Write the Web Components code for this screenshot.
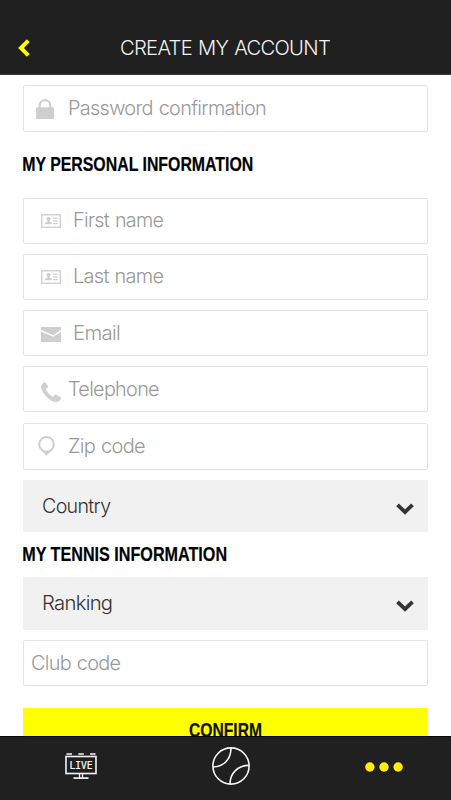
<!DOCTYPE html>
<html lang="en"><head><meta charset="utf-8"><title>Create my account</title>
<style>html,body{margin:0;height:100%;background:#fff;overflow:hidden}</style></head>
<body><account-screen></account-screen>
<script>
const define = (name, html, init) => customElements.define(name, class extends HTMLElement {
  connectedCallback() {
    if (this.shadowRoot) return;
    const root = this.attachShadow({mode: 'open'});
    root.innerHTML = html;
    if (init) init.call(this, root);
  }
});

const icons = {
  lock: ['0 0 18 20', 18, 20, '<path fill="#cfcfcf" d="M1 8.2h1.6V6.4C2.600 2.600 5.400 .3 9 .3s6.400 2.300 6.400 6.100v1.800H17q1 0 1 1v9.800q0 1-1 1H1q-1 0-1-1V9.200q0-1 1-1zM4.700 8.200h8.600V6.400C13.300 3.900 11.600 2.300 9 2.300S4.700 3.900 4.700 6.400z"/>'],
  card: ['0 0 20 14', 20, 14, '<rect x=".75" y=".75" width="18.500" height="12.500" fill="none" stroke="#d2d2d2" stroke-width="1.500"/><g fill="#cecece"><ellipse cx="7.500" cy="5.100" rx="2" ry="2.100"/><path d="M6.800 6h1.400v1.600l2.600 1.100v1.500H4V8.700l2.800-1.100z"/><path d="M12 3.500h4.700v1.300H12zM12 6.200h4.700v1.200H12zM12 8.900h4.700v1.300H12z"/></g>'],
  mail: ['0 0 20 15', 20, 15, '<path fill="#cfcfcf" d="M0 0h20v2.700L12.200 8.200 0 2.800zM0 4.500l12.200 5.200L20 4.700V15H0z"/>'],
  phone: ['0 0 20 20', 20, 20, '<path fill="#cfcfcf" d="M.6 2.700 3.400.3Q4.200-.1 4.800.7L6.900 4q.4.800-.3 1.400L5.300 6.600q-.4.500 0 1.300 2 4 5.700 6.500.8.500 1.300 0l1.500-1.500q.6-.5 1.400-.1l4.200 2.300q.9.600.5 1.400-1.500 3.300-4.500 3.500-4.300 0-9-4.500Q.200 9.500 0 4.900 0 3.500.600 2.700z"/>'],
  pin: ['0 0 17 20', 17, 20, '<path fill="#cfcfcf" fill-rule="evenodd" d="M8.500 0a8.300 8.300 0 0 1 8.300 8.300c0 3.600-2.200 5.900-4.800 8L8.500 19.800 5 16.300c-2.600-2.100-4.800-4.400-4.800-8A8.300 8.300 0 0 1 8.500 0zm0 1.900a6.300 6.300 0 1 0 0 12.600 6.300 6.300 0 0 0 0-12.600z"/>'],
  back: ['0 0 12 18', 12, 18, '<path d="M10.300 1.700 3 9l7.300 7.300" fill="none" stroke="#ff0" stroke-width="4"/>'],
  down: ['0 0 18 12', 18, 12, '<path d="M1.500 1.800 9 9l7.500-7.200" fill="none" stroke="#333" stroke-width="3.800"/>'],
  live: ['0 0 32 26', 32, 26, '<g fill="none" stroke="#f4f4f4"><rect x="1" y="3.500" width="30" height="17" stroke-width="1.600"/><path d="M1.500 .9h5.500M13.300 .9h5.500M25 .9h5.500" stroke-width="1.500"/><path d="M14.500 21v4M17.500 21v4" stroke-width="1.300"/><path d="M8.500 25.100h15" stroke-width="1.700"/></g><text x="4.500" y="16" textLength="23" lengthAdjust="spacingAndGlyphs" font-family="DejaVu Sans Mono,monospace" font-size="11" fill="#fff" stroke="#fff" stroke-width=".2">LIVE</text>'],
  ball: ['0 0 38 38', 38, 38, '<g fill="none" stroke="#f6f6f6" stroke-width="1.600"><circle cx="19" cy="19" r="18.100"/><path d="M19 .9C19 12 12 19.900 1 20M37 18.400C26 18.500 18 26 18 37"/></g>'],
  more: ['0 0 38 10', 38, 10, '<g fill="#ffee0a"><circle cx="4.900" cy="5" r="4.700"/><circle cx="19" cy="5" r="4.700"/><circle cx="33.100" cy="5" r="4.700"/></g>']
};

define('ui-icon', '<style>:host{display:block;flex:none}svg{display:block}</style>', function (root) {
  const [box, w, h, art] = icons[this.getAttribute('name')];
  root.innerHTML += `<svg viewBox="${box}" width="${w}" height="${h}">${art}</svg>`;
});

/* A single line of text whose visible width equals the "w" attribute. */
define('fit-text', `<style>
  :host{display:block;flex:none;white-space:nowrap;height:24px;font:300 20px/24px Inter,"Liberation Sans",sans-serif;letter-spacing:-.7px;word-spacing:1px}
  :host([bold]){font:700 20px/24px "Liberation Sans Narrow","Liberation Sans",sans-serif;letter-spacing:0px;word-spacing:0px;-webkit-text-stroke:.2px}
  span{display:inline-block;transform-origin:0 0}
</style><span></span>`, function (root) {
  const span = root.querySelector('span'), w = +this.getAttribute('w');
  span.textContent = this.getAttribute('text');
  this.style.width = w + 'px';
  const ctx = document.createElement('canvas').getContext('2d');
  const cs = getComputedStyle(this);
  ctx.font = `${cs.fontWeight} ${cs.fontSize} ${cs.fontFamily}`;
  ctx.letterSpacing = this.hasAttribute('bold') ? '0px' : '-0.7px';
  ctx.wordSpacing = this.hasAttribute('bold') ? '0px' : '1px';
  const m = ctx.measureText(span.textContent);
  const s = w / (m.actualBoundingBoxLeft + m.actualBoundingBoxRight);
  span.style.transform = `translateX(${m.actualBoundingBoxLeft * s}px) scaleX(${s})`;
});

define('app-header', `<style>
  :host{display:grid;grid-template-columns:1fr auto 1fr;align-items:start;height:75px;box-sizing:border-box;padding-top:36px;background:#202020;color:#f2f2f2;border-bottom:1px solid #3c3c3c}
  ui-icon{margin:3px 0 0 18px}
</style><ui-icon name="back"></ui-icon><fit-text text="CREATE MY ACCOUNT" w="209"></fit-text>`);

define('form-field', `<style>
  :host{display:flex;align-items:center;box-sizing:border-box;height:46px;border:1.5px solid #e3e3e3;border-radius:2px;color:#999;background:#fff}
  fit-text{margin-bottom:var(--lift,0px)}
</style>`, function (root) {
  const name = this.getAttribute('icon');
  if (name) {
    const [left, gap, top] = this.getAttribute('place').split(' ');
    root.innerHTML += `<ui-icon name="${name}" style="margin:${top}px ${gap}px 0 ${left}px"></ui-icon>`;
  } else root.innerHTML += '<span style="width:8.500px"></span>';
  root.innerHTML += `<fit-text text="${this.getAttribute('label')}" w="${this.getAttribute('w')}"></fit-text>`;
});

define('select-field', `<style>
  :host{display:flex;align-items:center;justify-content:space-between;box-sizing:border-box;height:52.500px;padding:0 14px 0 20.500px;background:#f1f1f1;color:#333}
  fit-text{margin-bottom:var(--lift,0px)}ui-icon{margin-top:5px}
</style>`, function (root) {
  root.innerHTML += `<fit-text text="${this.getAttribute('label')}" w="${this.getAttribute('w')}"></fit-text><ui-icon name="down"></ui-icon>`;
});

define('confirm-button', `<style>
  :host{display:flex;justify-content:center;height:50px;padding-top:10px;box-sizing:border-box;background:#ff0;color:#111}
</style><fit-text bold text="CONFIRM" w="72.500"></fit-text>`);

define('tab-bar', `<style>
  :host{display:grid;grid-template-columns:161px 139px 1fr;height:64px;box-sizing:border-box;border-top:1px solid #080808;background:#202020;align-items:start;justify-items:center}
  :nth-of-type(1){margin-top:16px}:nth-of-type(2){margin-top:10px}:nth-of-type(3){margin:25px 0 0 16px}
</style><ui-icon name="live"></ui-icon><ui-icon name="ball"></ui-icon><ui-icon name="more"></ui-icon>`);

define('account-screen', `<style>
  :host{display:grid;grid-template-rows:75px 661px 64px;height:800px;width:451px}
  main{display:flex;flex-direction:column;overflow:hidden;padding:10px 22.700px 0 22.700px;color:#000}
  main>*{flex:none}
  section{display:flex;flex-direction:column;gap:10.250px}
</style>
<app-header></app-header>
<main>
  <form-field style="height:47px;--lift:1px" icon="lock" place="12 15.500 0" label="Password confirmation" w="197"></form-field>
  <fit-text bold text="MY PERSONAL INFORMATION" w="230.500" style="margin:20px 0 21.500px .8px"></fit-text>
  <section>
    <form-field style="--lift:2px" icon="card" place="17 13.500 0" label="First name" w="89.500"></form-field>
    <form-field style="--lift:2px" icon="card" place="17 13.500 0" label="Last name" w="89.500"></form-field>
    <form-field icon="mail" place="17 13.500 2" label="Email" w="45"></form-field>
    <form-field icon="phone" place="17 8.500 6" label="Telephone" w="90"></form-field>
    <form-field style="height:47px" icon="pin" place="14 14.500 -1" label="Zip code" w="76"></form-field>
    <select-field label="Country" w="68"></select-field>
  </section>
  <fit-text bold text="MY TENNIS INFORMATION" w="204" style="margin:9.500px 0 11.500px .8px"></fit-text>
  <section>
    <select-field style="--lift:1px" label="Ranking" w="69"></select-field>
    <form-field label="Club code" w="88.500"></form-field>
  </section>
  <confirm-button style="margin-top:21.500px"></confirm-button>
</main>
<tab-bar></tab-bar>`);
</script></body></html>
